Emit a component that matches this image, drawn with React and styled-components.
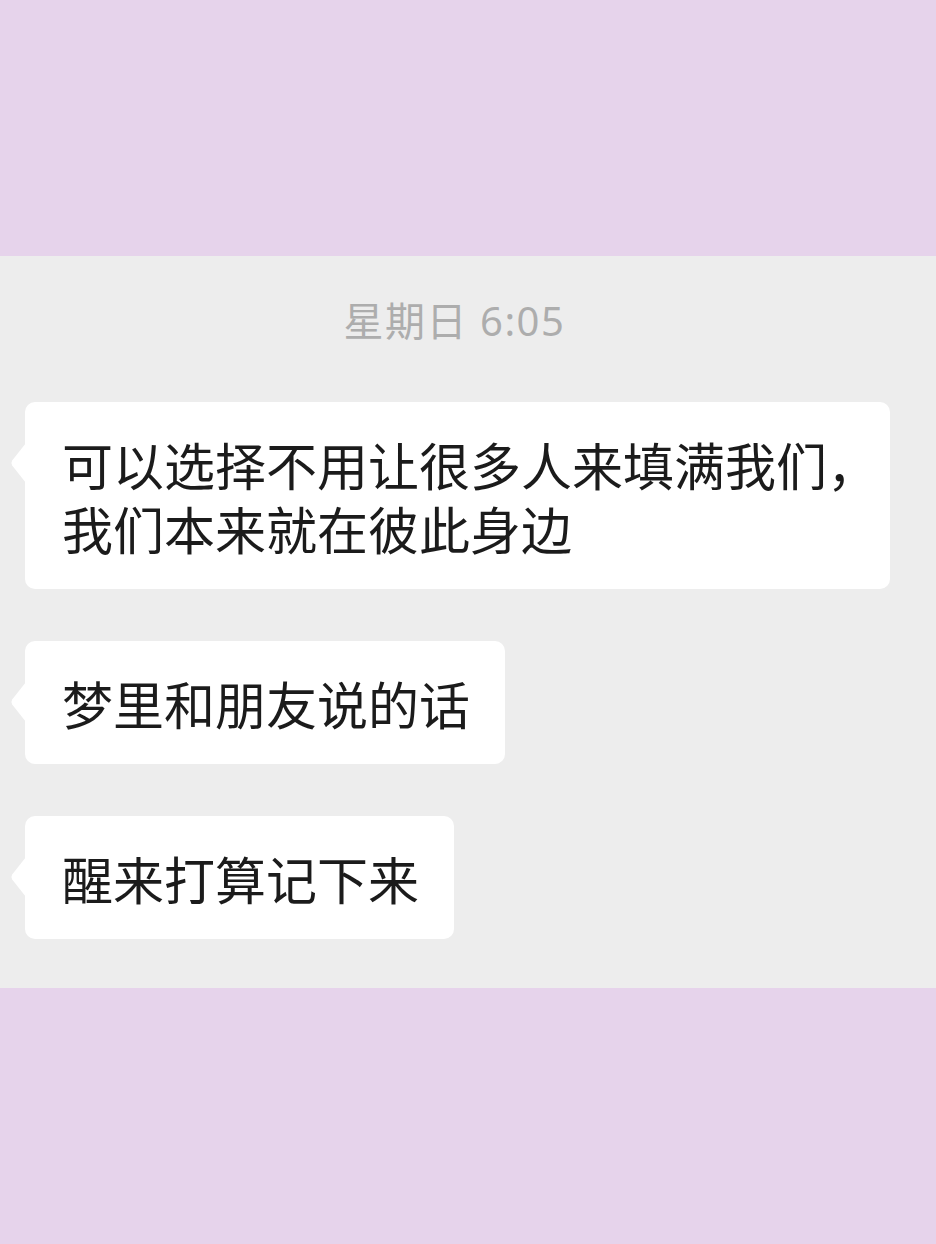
import styled, { createGlobalStyle } from 'styled-components';

const GlobalStyle = createGlobalStyle`
	html, body {
		margin: 0;
		padding: 0;
		background: #e6d3eb;
	}
	body {
		font-family: "Noto Sans", "Noto Sans CJK SC", sans-serif;
	}
`;

const Page = styled.div`
	display: flex;
	flex-direction: column;
	width: 936px;
	min-height: 1244px;
	background: #e6d3eb;
`;

const Band = styled.div`
	height: 256px;
	background: #e6d3eb;
`;

const Chat = styled.div`
	display: flex;
	flex-direction: column;
	align-items: flex-start;
	padding: 40px 0 49px 25px;
	background: #ededed;
`;

const Time = styled.div`
	align-self: stretch;
	padding-right: 52px;
	margin-bottom: 56px;
	text-align: center;
	font-size: 40px;
	line-height: 50px;
	letter-spacing: 1.5px;
	color: #adadad;
`;

const List = styled.div`
	display: flex;
	flex-direction: column;
	align-items: flex-start;
	gap: 52px;
`;

const Bubble = styled.div`
	position: relative;
	box-sizing: border-box;
	max-width: 865px;
	width: ${({ $wide }) => ($wide ? '865px' : 'auto')};
	padding: 30px 35px 29px 37px;
	border-radius: 10px;
	background: #fff;
	color: #1b1b1b;
	font-family: "Noto Sans CJK SC", sans-serif;
	font-size: 51px;
	line-height: 64px;
	white-space: nowrap;
`;

const Line = styled.div`
	height: 64px;
`;

const Tail = styled.svg`
	position: absolute;
	left: -15px;
	top: 41px;
	width: 16px;
	height: 40px;
`;

const messages = [
	{ id: 1, lines: ['可以选择不用让很多人来填满我们，', '我们本来就在彼此身边'], wide: true },
	{ id: 2, lines: ['梦里和朋友说的话'] },
	{ id: 3, lines: ['醒来打算记下来'] },
];

const Message = ({ lines, wide }) => (
	<Bubble $wide={wide}>
		<Tail viewBox="0 0 16 40">
			<path d="M16 0 L16 40 L2.2 22.4 Q0.6 20 2.2 17.6 Z" fill="#fff" />
		</Tail>
		{lines.map((line, i) => (
			<Line key={i}>{line}</Line>
		))}
	</Bubble>
);

export default function App() {
	return (
		<Page>
			<GlobalStyle />
			<Band />
			<Chat>
				<Time>星期日 6:05</Time>
				<List>
					{messages.map(({ id, lines, wide }) => (
						<Message key={id} lines={lines} wide={wide} />
					))}
				</List>
			</Chat>
			<Band />
		</Page>
	);
}
